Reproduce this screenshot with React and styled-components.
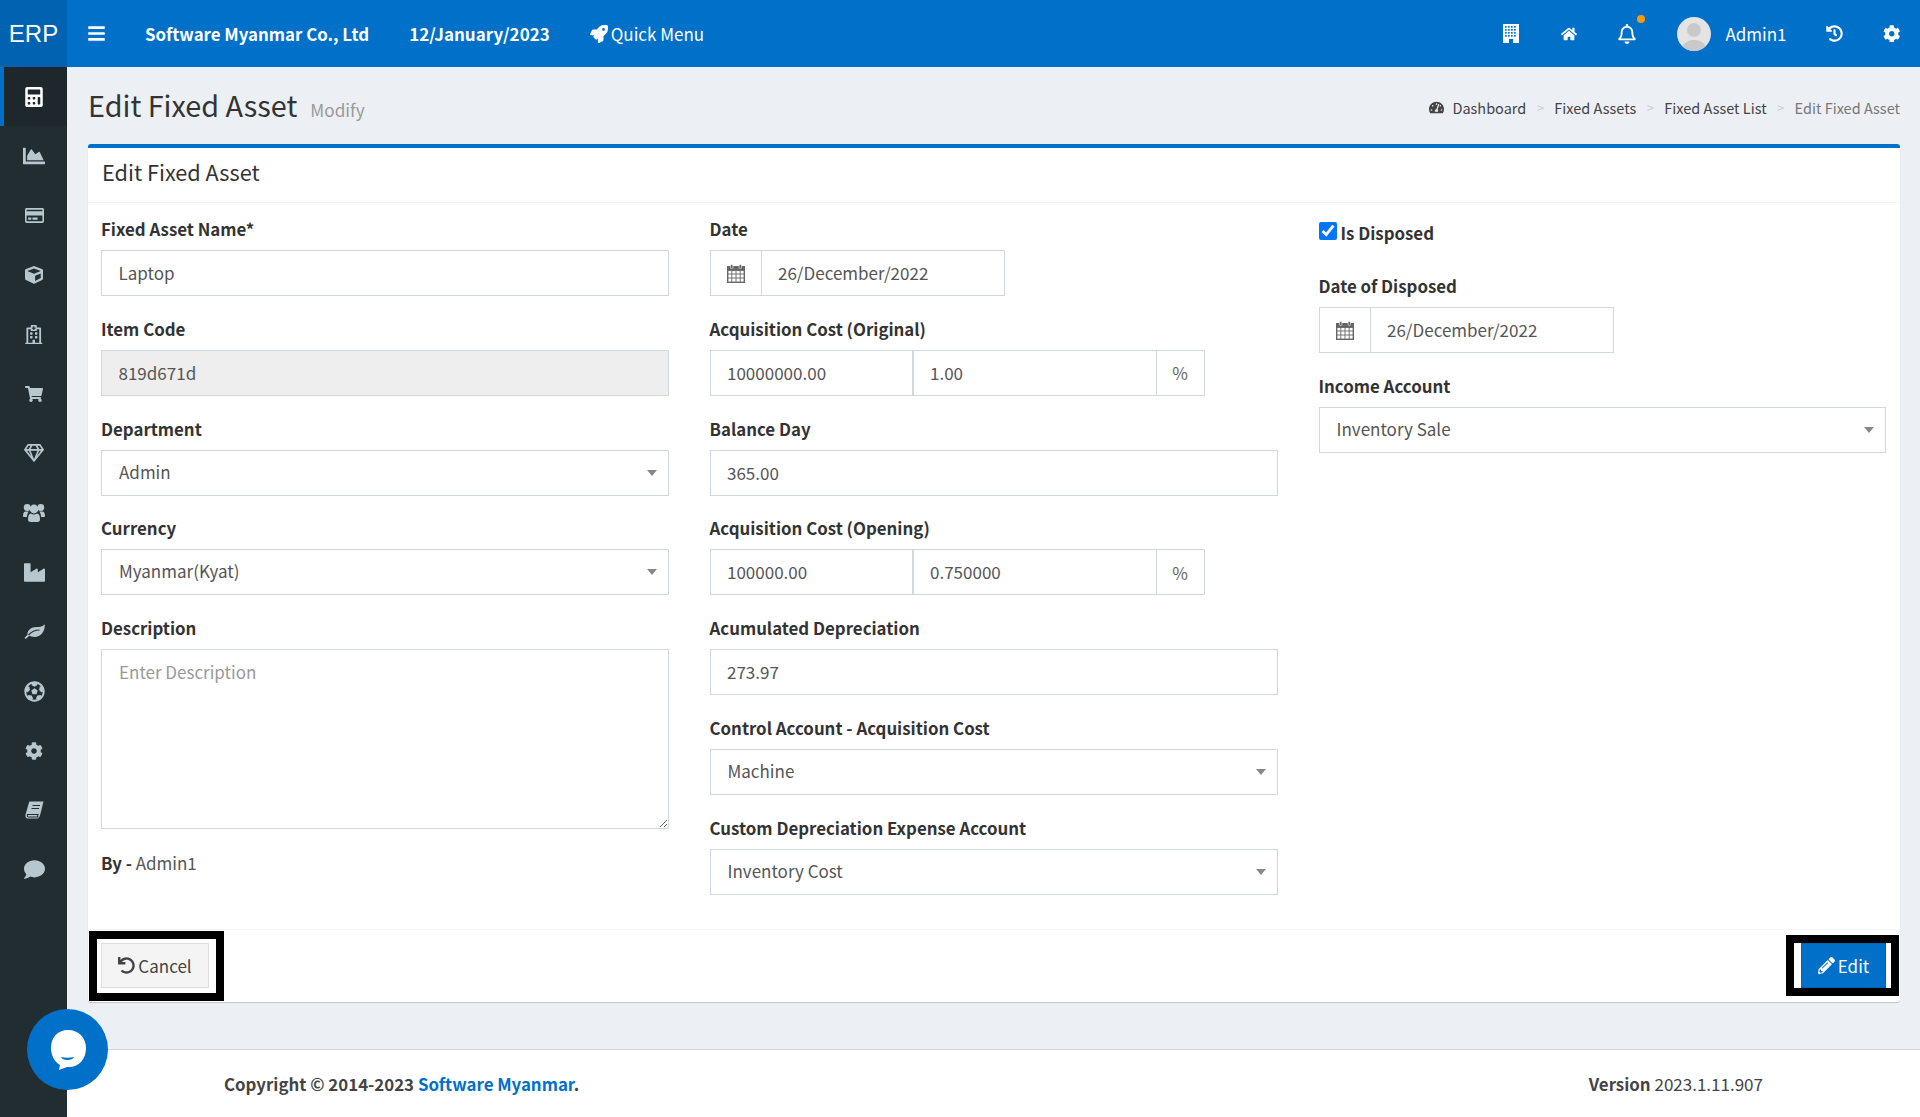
import React from "react";
import styled, { createGlobalStyle } from "styled-components";
import {
  FaBars,
  FaCalculator,
  FaChartArea,
  FaCog,
  FaComment,
  FaCube,
  FaFutbol,
  FaHistory,
  FaHome,
  FaIndustry,
  FaPencilAlt,
  FaRegBell,
  FaRegCreditCard,
  FaRegGem,
  FaRegHospital,
  FaRocket,
  FaShoppingCart,
  FaTachometerAlt,
  FaUndo,
} from "react-icons/fa";

const BLUE = "#0070c9";
const SIDE_BG = "#222d32";
const FONT = `"Noto Sans CJK SC", "Open Sans", sans-serif`;

const GlobalStyle = createGlobalStyle`
  * {
    box-sizing: border-box;
  }
  html, body {
    margin: 0;
    padding: 0;
  }
  body {
    font-family: ${FONT};
    font-size: 17px;
    color: #333;
    background: #ecf0f5;
  }
  b {
    font-size: 16.85px;
  }
`;

const Page = styled.div`
  display: flex;
  flex-direction: column;
  height: 1117px;
  overflow: hidden;
`;

const TopBar = styled.header`
  height: 67px;
  flex: none;
  display: flex;
  align-items: center;
  background: ${BLUE};
  color: #fff;
`;

const Logo = styled.div`
  width: 67px;
  height: 67px;
  background: #0062b1;
  display: flex;
  align-items: center;
  justify-content: center;
  font-family: "Liberation Sans", sans-serif;
  font-size: 24px;
`;

const MenuToggle = styled.div`
  margin-left: 21px;
  width: 17px;
  display: flex;
  font-size: 19px;
`;

const Company = styled.b`
  margin-left: 40px;
`;

const DateText = styled.b`
  margin-left: 40px;
  font-size: 17px;
`;

const QuickMenu = styled.div`
  margin-left: 40px;
  display: flex;
  align-items: center;
  gap: 3px;
  svg {
    font-size: 18px;
  }
`;

const TopRight = styled.div`
  margin-left: auto;
  margin-right: 20px;
  display: flex;
  align-items: center;
`;

const TopIcon = styled.span`
  position: relative;
  display: flex;
  font-size: ${(p) => p.size || 18}px;
  margin-left: ${(p) => p.gap || 0}px;
`;

const Dot = styled.span`
  position: absolute;
  top: -9px;
  right: -8px;
  width: 8px;
  height: 8px;
  border-radius: 50%;
  background: #f39c12;
`;

const Avatar = styled.svg`
  width: 34px;
  height: 34px;
  margin-left: 40px;
  border-radius: 50%;
`;

const UserName = styled.span`
  margin-left: 14px;
`;

const Body = styled.div`
  flex: 1;
  display: flex;
  min-height: 0;
`;

const Sidebar = styled.nav`
  width: 67px;
  flex: none;
  background: ${SIDE_BG};
`;

const SideItem = styled.div`
  height: 59.45px;
  display: flex;
  align-items: center;
  justify-content: center;
  font-size: ${(p) => p.size}px;
  color: ${(p) => (p.active ? "#fff" : "#b8c7ce")};
  background: ${(p) => (p.active ? "#1e282c" : "transparent")};
  border-left: 4px solid ${(p) => (p.active ? BLUE : "transparent")};
  padding-right: 3px;
`;

const Main = styled.main`
  flex: 1;
  display: flex;
  flex-direction: column;
  min-width: 0;
`;

const Content = styled.div`
  flex: 1;
  padding: 0 20px 0 21px;
`;

const ContentHeader = styled.div`
  height: 77px;
  display: flex;
  align-items: center;
  justify-content: space-between;
  padding-bottom: 2px;
`;

const TitleRow = styled.div`
  display: flex;
  align-items: baseline;
  gap: 13px;
`;

const Title = styled.h1`
  margin: 0;
  font-size: 28.8px;
  font-weight: 400;
  line-height: 38px;
`;

const Subtitle = styled.small`
  font-size: 17.2px;
  color: #999;
`;

const Breadcrumb = styled.div`
  display: flex;
  align-items: center;
  font-size: 14.5px;
  color: #444;
  padding-top: 6px;
`;

const Crumb = styled.span`
  display: flex;
  align-items: center;
  gap: 8px;
  color: ${(p) => (p.current ? "#777" : "#444")};
  svg {
    font-size: 15px;
  }
`;

const CrumbSep = styled.span`
  margin: 0 10.4px;
  color: #ccc;
  font-size: 13px;
`;

const Card = styled.section`
  background: #fff;
  border-top: 4px solid ${BLUE};
  border-radius: 3px;
  box-shadow: 0 1px 1px rgba(0, 0, 0, 0.18);
`;

const CardHeader = styled.div`
  height: 55px;
  display: flex;
  align-items: center;
  padding: 0 14px 7px;
  border-bottom: 1px solid #f4f4f4;
  font-size: 21.7px;
`;

const FormGrid = styled.div`
  display: grid;
  grid-template-columns: 567.5px 568px 567.5px;
  column-gap: 41px;
  padding: 15px 13px 12px;
`;

const Column = styled.div`
  display: flex;
  flex-direction: column;
`;

const Group = styled.div`
  margin-bottom: 21.8px;
`;

const Label = styled.label`
  display: block;
  height: 25px;
  line-height: 21px;
  margin-bottom: 7px;
  font-size: 16.85px;
  font-weight: 700;
`;

const Input = styled.input`
  display: block;
  width: ${(p) => p.width || "100%"};
  height: 46px;
  padding: 0 16.5px 1px;
  border: 1px solid #d2d6de;
  border-radius: 0;
  outline: none;
  font-family: ${FONT};
  font-size: 17px;
  color: #555;
  background: ${(p) => (p.disabled ? "#eee" : "#fff")};
`;

const Textarea = styled.textarea`
  display: block;
  width: 100%;
  height: 180px;
  padding: 9px 17px;
  border: 1px solid #d2d6de;
  border-radius: 0;
  outline: none;
  font-family: ${FONT};
  font-size: 17px;
  color: #555;
  &::placeholder {
    color: #999;
    opacity: 1;
  }
`;

const SelectBox = styled.div`
  height: 46px;
  display: flex;
  align-items: center;
  justify-content: space-between;
  padding: 0 11px 3px 17px;
  border: 1px solid #d2d6de;
  color: #555;
`;

const Caret = styled.span`
  width: 0;
  height: 0;
  margin-top: 3px;
  border-left: 5px solid transparent;
  border-right: 5px solid transparent;
  border-top: 6px solid #888;
`;

const InputGroup = styled.div`
  display: flex;
  width: ${(p) => p.width};
  height: 46px;
`;

const Addon = styled.span`
  flex: none;
  width: ${(p) => p.width}px;
  display: flex;
  align-items: center;
  justify-content: center;
  border: 1px solid #d2d6de;
  border-width: ${(p) => (p.right ? "1px 1px 1px 0" : "1px 0 1px 1px")};
  color: #666;
  font-size: 17px;
`;

const ByLine = styled.div`
  height: 25px;
  line-height: 23px;
  color: #555;
  b {
    color: #333;
  }
`;

const CheckRow = styled.div`
  height: 42px;
  display: flex;
  align-items: flex-start;
  gap: 4px;
  margin-bottom: 15px;
  font-size: 16.85px;
  font-weight: 700;
  input {
    width: 18px;
    height: 18px;
    margin: 3.5px 0 0;
  }
  span {
    line-height: 21px;
    padding-top: 4px;
  }
`;

const CardFooter = styled.div`
  display: flex;
  justify-content: space-between;
  padding: 13px 14px 14px 13px;
  border-top: 1px solid #f4f4f4;
`;

const Framed = styled.div`
  position: relative;
  &::before {
    content: "";
    position: absolute;
    top: ${(p) => p.inset[0]}px;
    right: ${(p) => p.inset[1]}px;
    bottom: ${(p) => p.inset[2]}px;
    left: ${(p) => p.inset[3]}px;
    border: 8px solid #000;
    pointer-events: none;
  }
`;

const Button = styled.button`
  height: 45px;
  display: flex;
  align-items: center;
  justify-content: center;
  gap: 3px;
  width: ${(p) => p.width}px;
  padding: 0;
  font-family: ${FONT};
  font-size: 17px;
  border-radius: 0;
  border: 1px solid ${(p) => (p.primary ? "#0063b3" : "#ddd")};
  background: ${(p) => (p.primary ? BLUE : "#f4f4f4")};
  color: ${(p) => (p.primary ? "#fff" : "#444")};
`;

const Footer = styled.footer`
  height: 68px;
  flex: none;
  display: flex;
  align-items: center;
  justify-content: space-between;
  padding: 0 157px;
  background: #fff;
  border-top: 1px solid #d2d6de;
  color: #444;
  b a {
    color: ${BLUE};
  }
`;

const ChatBubble = styled.div`
  position: fixed;
  left: 27px;
  bottom: 27px;
  width: 81px;
  height: 81px;
  border-radius: 50%;
  background: ${BLUE};
  display: flex;
  align-items: center;
  justify-content: center;
`;

const UsersIcon = () => (
  <svg width="22" height="19" viewBox="0 0 22 19" fill="currentColor">
    <circle cx="4.2" cy="4.5" r="3.4" />
    <circle cx="17.8" cy="4.5" r="3.4" />
    <circle cx="11" cy="6" r="4.4" />
    <path d="M0 13c0-3 1-4.500 2.500-4.500h3.200C4.500 10 4 11.500 4 14H1c-.6 0-1-.4-1-1z" />
    <path d="M22 13c0-3-1-4.500-2.500-4.500h-3.200c1.200 1.500 1.700 3 1.700 5.500h3c.6 0 1-.4 1-1z" />
    <path d="M5 16.500c0-4 1-6 3-6 1 .7 2 1 3 1s2-.3 3-1c2 0 3 2 3 6 0 1.500-1 2.500-2.500 2.500h-7C6 19 5 18 5 16.500z" />
  </svg>
);

const LeafIcon = () => (
  <svg width="21" height="15" viewBox="0 0 21 15">
    <path
      d="M20.800.3c.4 6.700-3.800 12.700-10.300 12.700-2.200 0-3.900-.5-5.200-1.200L1.800 15 .5 13.700l3-3C3 5.500 8.500 2.300 13.500 3c3 .4 5.300-.8 7.300-2.700z"
      fill="currentColor"
    />
    <path d="M4.500 11c3-3.500 6.500-5 11-5" fill="none" stroke={SIDE_BG} strokeWidth="1.200" />
  </svg>
);

const BookIcon = () => (
  <svg width="19" height="18" viewBox="0 0 19 18">
    <path
      d="M5 .5h13.500l-3.500 14c-.3 1.200-1.200 3-2.800 3H2.800C1 17.500 0 15.500.5 13.500L4 1.500c.1-.6.500-1 1-1z"
      fill="currentColor"
    />
    <path
      d="M7.500 4.500h7.500M6.500 7.500h7.500M2.500 13.500h10.500c-.4 1-.4 2 0 2.500H3.500c-1 0-1.500-1.600-1-2.500z"
      fill="none"
      stroke={SIDE_BG}
      strokeWidth="1.100"
    />
  </svg>
);

const BuildingIcon = () => (
  <svg width="16" height="19" viewBox="0 0 16 19">
    <rect width="16" height="19" fill="#fff" />
    {[2, 5, 8, 11].map((x) =>
      [2, 5, 8, 11].map((y) => (
        <rect key={`${x}-${y}`} x={x} y={y} width="1.700" height="1.700" fill={BLUE} />
      ))
    )}
    <rect x="6" y="15" width="4" height="4" fill={BLUE} />
  </svg>
);

const CalendarIcon = () => (
  <svg width="18" height="19" viewBox="0 0 18 19" fill="none" stroke="currentColor">
    <rect x=".7" y="2.700" width="16.600" height="15.600" strokeWidth="1.400" />
    <rect x=".7" y="2.700" width="16.600" height="3.500" fill="currentColor" strokeWidth="1.400" />
    <path d="M4.800 6v12M9 6v12M13.200 6v12M1 10h16M1 14h16" strokeWidth=".9" />
    <rect x="3.500" y=".5" width="2.400" height="4" rx="1" fill="currentColor" stroke="#fff" strokeWidth=".6" />
    <rect x="12.100" y=".5" width="2.400" height="4" rx="1" fill="currentColor" stroke="#fff" strokeWidth=".6" />
  </svg>
);

const sideItems = [
  [FaCalculator, 20],
  [FaChartArea, 22],
  [FaRegCreditCard, 19],
  [FaCube, 18],
  [FaRegHospital, 19.5],
  [FaShoppingCart, 18],
  [FaRegGem, 20],
  [UsersIcon, 18],
  [FaIndustry, 21],
  [LeafIcon, 19],
  [FaFutbol, 21],
  [FaCog, 18],
  [BookIcon, 19],
  [FaComment, 21],
];

const DateField = ({ value }) => (
  <InputGroup width="295px">
    <Addon width={51}>
      <CalendarIcon />
    </Addon>
    <Input readOnly defaultValue={value} />
  </InputGroup>
);

const CostField = ({ cost, rate }) => (
  <InputGroup width="495px">
    <Input readOnly width="203px" defaultValue={cost} />
    <Input readOnly width="244px" defaultValue={rate} />
    <Addon right width={48}>
      %
    </Addon>
  </InputGroup>
);

const Select = ({ value }) => (
  <SelectBox>
    {value}
    <Caret />
  </SelectBox>
);

const App = () => (
  <Page>
    <GlobalStyle />
    <TopBar>
      <Logo>ERP</Logo>
      <MenuToggle>
        <FaBars />
      </MenuToggle>
      <Company>Software Myanmar Co., Ltd</Company>
      <DateText>12/January/2023</DateText>
      <QuickMenu>
        <FaRocket />
        Quick Menu
      </QuickMenu>
      <TopRight>
        <TopIcon>
          <BuildingIcon />
        </TopIcon>
        <TopIcon gap={42} size={16}>
          <FaHome />
        </TopIcon>
        <TopIcon gap={40} size={20}>
          <FaRegBell />
          <Dot />
        </TopIcon>
        <Avatar viewBox="0 0 34 34">
          <rect width="34" height="34" fill="#e4e4e4" />
          <circle cx="17" cy="13" r="7" fill="#c9c9c9" />
          <path d="M4 34c1-9 8-11 13-11s12 2 13 11z" fill="#c9c9c9" />
        </Avatar>
        <UserName>Admin1</UserName>
        <TopIcon gap={39} size={17}>
          <FaHistory />
        </TopIcon>
        <TopIcon gap={40} size={17.5}>
          <FaCog />
        </TopIcon>
      </TopRight>
    </TopBar>
    <Body>
      <Sidebar>
        {sideItems.map(([Icon, size], i) => (
          <SideItem key={i} active={i === 0} size={size}>
            <Icon />
          </SideItem>
        ))}
      </Sidebar>
      <Main>
        <Content>
          <ContentHeader>
            <TitleRow>
              <Title>Edit Fixed Asset</Title>
              <Subtitle>Modify</Subtitle>
            </TitleRow>
            <Breadcrumb>
              <Crumb>
                <FaTachometerAlt />
                Dashboard
              </Crumb>
              <CrumbSep>&gt;</CrumbSep>
              <Crumb>Fixed Assets</Crumb>
              <CrumbSep>&gt;</CrumbSep>
              <Crumb>Fixed Asset List</Crumb>
              <CrumbSep>&gt;</CrumbSep>
              <Crumb current>Edit Fixed Asset</Crumb>
            </Breadcrumb>
          </ContentHeader>
          <Card>
            <CardHeader>Edit Fixed Asset</CardHeader>
            <FormGrid>
              <Column>
                <Group>
                  <Label>Fixed Asset Name*</Label>
                  <Input readOnly defaultValue="Laptop" />
                </Group>
                <Group>
                  <Label>Item Code</Label>
                  <Input disabled defaultValue="819d671d" />
                </Group>
                <Group>
                  <Label>Department</Label>
                  <Select value="Admin" />
                </Group>
                <Group>
                  <Label>Currency</Label>
                  <Select value="Myanmar(Kyat)" />
                </Group>
                <Group>
                  <Label>Description</Label>
                  <Textarea placeholder="Enter Description" />
                </Group>
                <ByLine>
                  <b>By -</b> Admin1
                </ByLine>
              </Column>
              <Column>
                <Group>
                  <Label>Date</Label>
                  <DateField value="26/December/2022" />
                </Group>
                <Group>
                  <Label>Acquisition Cost (Original)</Label>
                  <CostField cost="10000000.00" rate="1.00" />
                </Group>
                <Group>
                  <Label>Balance Day</Label>
                  <Input readOnly defaultValue="365.00" />
                </Group>
                <Group>
                  <Label>Acquisition Cost (Opening)</Label>
                  <CostField cost="100000.00" rate="0.750000" />
                </Group>
                <Group>
                  <Label>Acumulated Depreciation</Label>
                  <Input readOnly defaultValue="273.97" />
                </Group>
                <Group>
                  <Label>Control Account - Acquisition Cost</Label>
                  <Select value="Machine" />
                </Group>
                <Group>
                  <Label>Custom Depreciation Expense Account</Label>
                  <Select value="Inventory Cost" />
                </Group>
              </Column>
              <Column>
                <CheckRow>
                  <input type="checkbox" defaultChecked />
                  <span>Is Disposed</span>
                </CheckRow>
                <Group>
                  <Label>Date of Disposed</Label>
                  <DateField value="26/December/2022" />
                </Group>
                <Group>
                  <Label>Income Account</Label>
                  <Select value="Inventory Sale" />
                </Group>
              </Column>
            </FormGrid>
            <CardFooter>
              <Framed inset={[-12, -15, -13, -12]}>
                <Button width={108}>
                  <FaUndo />
                  Cancel
                </Button>
              </Framed>
              <Framed inset={[-8, -13, -8, -15]}>
                <Button primary width={85}>
                  <FaPencilAlt />
                  Edit
                </Button>
              </Framed>
            </CardFooter>
          </Card>
        </Content>
        <Footer>
          <b>
            Copyright © 2014-2023 <a>Software Myanmar</a>.
          </b>
          <span>
            <b>Version</b> 2023.1.11.907
          </span>
        </Footer>
      </Main>
    </Body>
    <ChatBubble>
      <svg width="40" height="44" viewBox="0 0 40 44">
        <path
          d="M20 2C9 2 3 10 3 20c0 8 4 14 9 17l-1 5 8-3c12 1 19-8 19-19C38 10 31 2 20 2z"
          fill="#fff"
        />
        <path d="M13 29c4 1 9 1 13 0-1 4-12 4-13 0z" fill={BLUE} />
      </svg>
    </ChatBubble>
  </Page>
);

export default App;
